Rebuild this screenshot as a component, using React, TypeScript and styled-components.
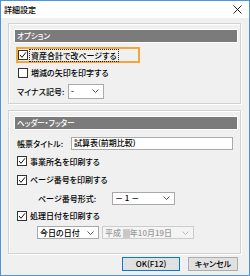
import React from "react";
import styled, { createGlobalStyle } from "styled-components";

const Global = createGlobalStyle`
  html, body { margin: 0; padding: 0; background: #ffffff; }
  body {
    font-family: "Noto Sans CJK JP", "Noto Sans", sans-serif;
    font-feature-settings: "palt" 1;
    font-size: 8px;
    font-weight: 500;
    color: #000;
  }
`;

const Window = styled.div`
  width: 250px;
  height: 276px;
  box-sizing: border-box;
  border: 1px solid #4a95de;
  background: #f0f0f0;
  display: flex;
  flex-direction: column;
  overflow: hidden;
`;

const TitleBar = styled.div`
  height: 17px;
  background: #fff;
  display: flex;
  align-items: center;
  justify-content: space-between;
  padding: 0 7px 0 3px;
  font-size: 8px;
  line-height: 1;
`;

const Body = styled.div`
  flex: 1;
  display: flex;
  flex-direction: column;
  padding: 5px 8px 0 7px;
`;

const Group = styled.div<{ $h: number; $mt?: number }>`
  box-sizing: border-box;
  height: ${(p) => p.$h}px;
  margin-top: ${(p) => p.$mt ?? 0}px;
  border: 1px solid #d2d2d2;
  box-shadow: inset 1px 1px 0 #fff, 1px 1px 0 #fff;
  padding: 5px 2px 0 5px;
  display: flex;
  flex-direction: column;
`;

const HeaderBar = styled.div`
  box-sizing: border-box;
  height: 14px;
  border: 1px solid #fff;
  background: #7b7b7b;
  color: #fff;
  font-size: 7.5px;
  line-height: 12px;
  padding-left: 2px;
  margin-bottom: 4px;
`;

const Row = styled.div<{ $h: number; $pl: number }>`
  height: ${(p) => p.$h}px;
  padding-left: ${(p) => p.$pl}px;
  display: flex;
  align-items: center;
  white-space: nowrap;
`;

const FocusFrame = styled.div`
  box-sizing: border-box;
  height: 16px;
  width: 124px;
  border: 2px solid #f5a53c;
  display: flex;
  align-items: center;
  margin-left: -2px;
`;

const Box = styled.span`
  box-sizing: border-box;
  width: 10px;
  height: 10px;
  border: 1px solid #333;
  background: #fff;
  display: inline-flex;
  align-items: center;
  justify-content: center;
  flex: none;
`;

const CheckLabel = styled.span<{ $focus?: boolean }>`
  margin-left: 1px;
  padding: 0 1px;
  line-height: 11px;
  border: 1px ${(p) => (p.$focus ? "dotted #222" : "solid transparent")};
`;

const Label = styled.span<{ $w?: number }>`
  width: ${(p) => (p.$w ? `${p.$w}px` : "auto")};
  flex: none;
`;

const Field = styled.div<{ $w: number; $h: number; $disabled?: boolean; $ml?: number }>`
  box-sizing: border-box;
  width: ${(p) => p.$w}px;
  height: ${(p) => p.$h}px;
  margin-left: ${(p) => p.$ml ?? 0}px;
  border: 1px solid ${(p) => (p.$disabled ? "#cccccc" : "#a9a9a9")};
  background: ${(p) => (p.$disabled ? "#f4f4f4" : "#fff")};
  color: ${(p) => (p.$disabled ? "#9a9a9a" : "#000")};
  display: flex;
  align-items: center;
  justify-content: space-between;
  padding: 0 4px 0 2px;
  line-height: 1;
  flex: none;
`;

const YearMark = styled.span`
  background: #cbcbcb;
  color: #c2c2c2;
  margin-left: 2px;
  font-size: 6px;
`;

const ButtonRow = styled.div`
  display: flex;
  justify-content: flex-end;
  gap: 8px;
  margin-top: 3px;
  padding-right: 3px;
`;

const Button = styled.div<{ $w: number; $default?: boolean }>`
  box-sizing: border-box;
  width: ${(p) => p.$w}px;
  height: 14px;
  background: #e1e1e1;
  border: 1px solid ${(p) => (p.$default ? "#0a78d7" : "#adadad")};
  display: flex;
  align-items: center;
  justify-content: center;
  font-size: 8px;
  line-height: 1;
`;

const Chevron = ({ color = "#444" }: { color?: string }) => (
  <svg width="7" height="4" viewBox="0 0 7 4">
    <path d="M0.5 0.5 L3.5 3.5 L6.5 0.5" fill="none" stroke={color} strokeWidth="0.9" />
  </svg>
);

const Check = ({ checked }: { checked?: boolean }) => (
  <Box>
    {checked && (
      <svg width="8" height="8" viewBox="0 0 8 8">
        <path d="M1 4 L3 6.3 L7 1.3" fill="none" stroke="#111" strokeWidth="1" />
      </svg>
    )}
  </Box>
);

const CloseIcon = () => (
  <svg width="9" height="9" viewBox="0 0 9 9">
    <path d="M0.5 0.5 L8.5 8.5 M8.5 0.5 L0.5 8.5" stroke="#222" strokeWidth="1" />
  </svg>
);

export default function App() {
  return (
    <>
      <Global />
      <Window>
        <TitleBar>
          <span>詳細設定</span>
          <CloseIcon />
        </TitleBar>
        <Body>
          <Group $h={81}>
            <HeaderBar>オプション</HeaderBar>
            <Row $h={16} $pl={4}>
              <FocusFrame>
                <Check checked />
                <CheckLabel $focus>資産合計で改ページする</CheckLabel>
              </FocusFrame>
            </Row>
            <Row $h={19} $pl={4}>
              <Check />
              <CheckLabel>増減の矢印を印字する</CheckLabel>
            </Row>
            <Row $h={18} $pl={3}>
              <Label $w={51}>マイナス記号:</Label>
              <Field $w={36} $h={15}>
                <span>-</span>
                <Chevron />
              </Field>
            </Row>
          </Group>

          <Group $h={144} $mt={6}>
            <HeaderBar>ヘッダー・フッター</HeaderBar>
            <Row $h={18} $pl={3}>
              <Label $w={54}>帳票タイトル:</Label>
              <Field $w={162} $h={13}>
                <span>試算表(前期比較)</span>
              </Field>
            </Row>
            <Row $h={18} $pl={3}>
              <Check checked />
              <CheckLabel>事業所名を印刷する</CheckLabel>
            </Row>
            <Row $h={19} $pl={3}>
              <Check checked />
              <CheckLabel>ページ番号を印刷する</CheckLabel>
            </Row>
            <Row $h={18} $pl={24}>
              <Label $w={74}>ページ番号形式:</Label>
              <Field $w={63} $h={13}>
                <span>－ 1 －</span>
                <Chevron />
              </Field>
            </Row>
            <Row $h={17} $pl={3}>
              <Check checked />
              <CheckLabel>処理日付を印刷する</CheckLabel>
            </Row>
            <Row $h={17} $pl={23}>
              <Field $w={62} $h={13}>
                <span>今日の日付</span>
                <Chevron />
              </Field>
              <Field $w={92} $h={13} $ml={3} $disabled>
                <span>
                  平成<YearMark>30</YearMark>年10月19日
                </span>
                <Chevron color="#b5b5b5" />
              </Field>
            </Row>
          </Group>

          <ButtonRow>
            <Button $w={58} $default>OK(F12)</Button>
            <Button $w={50}>キャンセル</Button>
          </ButtonRow>
        </Body>
      </Window>
    </>
  );
}
